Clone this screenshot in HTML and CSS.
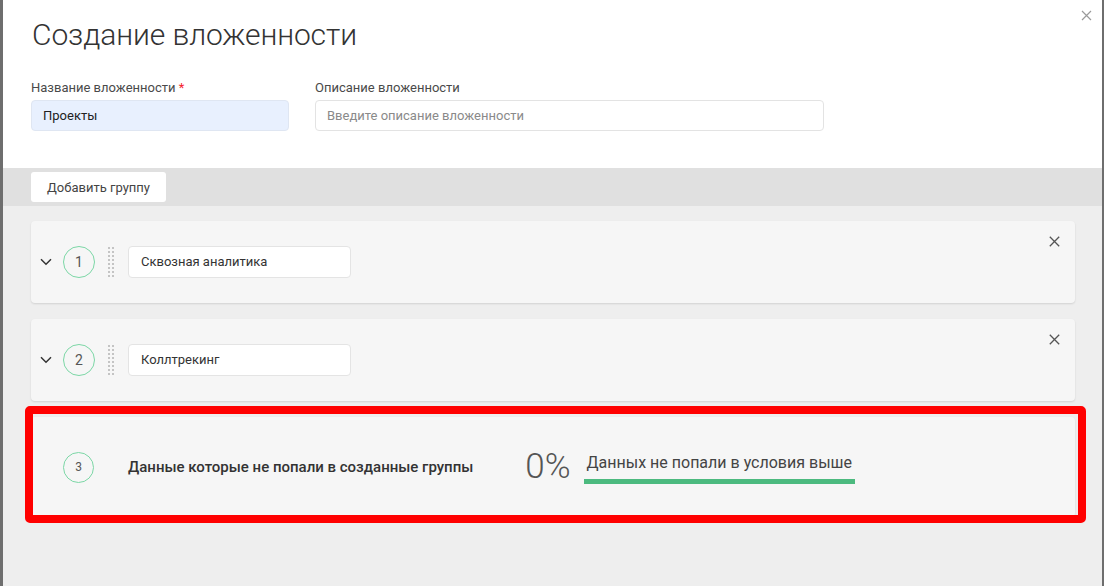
FILE: index.html
```html
<!DOCTYPE html>
<html lang="ru">
<head>
<meta charset="utf-8">
<title>Создание вложенности</title>
<link rel="stylesheet" href="styles.css">
</head>
<body>
<div class="page">
  <div class="modal">
    <div class="modal-head">
      <h1 class="title">Создание вложенности</h1>
      <button class="modal-close" aria-label="Закрыть">
        <svg width="11" height="11" viewBox="0 0 11 11"><path d="M1 1L10 10M10 1L1 10" stroke="#9a9a9a" stroke-width="1.2" fill="none"/></svg>
      </button>
      <div class="fields">
        <div class="field field-name">
          <label class="label">Название вложенности <span class="req">*</span></label>
          <div class="input input-filled">Проекты</div>
        </div>
        <div class="field field-desc">
          <label class="label">Описание вложенности</label>
          <div class="input input-empty">Введите описание вложенности</div>
        </div>
      </div>
    </div>
    <div class="toolbar">
      <button class="btn">Добавить группу</button>
    </div>
    <div class="content">
      <div class="card">
        <svg class="chevron" width="12" height="8" viewBox="0 0 12 8"><path d="M1 1.3L6 6.3L11 1.3" stroke="#333" stroke-width="1.5" fill="none"/></svg>
        <div class="num">1</div>
        <div class="handle"></div>
        <div class="group-input">Сквозная аналитика</div>
        <svg class="card-close" width="11" height="11" viewBox="0 0 11 11"><path d="M0.8 0.8L10.2 10.2M10.2 0.8L0.8 10.2" stroke="#555" stroke-width="1.3" fill="none"/></svg>
      </div>
      <div class="card">
        <svg class="chevron" width="12" height="8" viewBox="0 0 12 8"><path d="M1 1.3L6 6.3L11 1.3" stroke="#333" stroke-width="1.5" fill="none"/></svg>
        <div class="num">2</div>
        <div class="handle"></div>
        <div class="group-input">Коллтрекинг</div>
        <svg class="card-close" width="11" height="11" viewBox="0 0 11 11"><path d="M0.8 0.8L10.2 10.2M10.2 0.8L0.8 10.2" stroke="#555" stroke-width="1.3" fill="none"/></svg>
      </div>
      <div class="card card-rest">
        <div class="num num-small">3</div>
        <div class="rest-label">Данные которые не попали в созданные группы</div>
        <div class="percent">0%</div>
        <div class="rest-note">Данных не попали в условия выше</div>
      </div>
    </div>
  </div>
</div>
</body>
</html>
```

FILE: styles.css
```css
* { box-sizing: border-box; }
html, body { margin: 0; padding: 0; }
body {
  width: 1104px;
  height: 586px;
  overflow: hidden;
  background: #6e6e6e;
  font-family: Roboto, "Liberation Sans", Arial, sans-serif;
  color: #333;
}
.page {
  display: flex;
  height: 586px;
  padding-left: 3px;
  padding-right: 2px;
}
.modal {
  flex: 1;
  display: flex;
  flex-direction: column;
  background: #eeeeee;
}
.modal-head {
  position: relative;
  background: #fff;
  height: 168px;
  padding: 14px 28px 0 29px;
}
.title {
  margin: 0;
  font-size: 30px;
  font-weight: 300;
  line-height: 42px;
  color: #333;
  letter-spacing: -0.1px;
}
.modal-close {
  position: absolute;
  top: 10px;
  right: 10px;
  width: 11px;
  height: 11px;
  padding: 0;
  border: 0;
  background: none;
  display: flex;
}
.fields {
  display: flex;
  gap: 26px;
  margin-top: 24px;
  margin-left: -1px;
}
.field { display: flex; flex-direction: column; }
.field-name { width: 258px; }
.field-desc { width: 509px; }
.label {
  font-size: 13px;
  line-height: 16px;
  color: #4a4a4a;
  margin-bottom: 4px;
}
.req { color: #f5222d; }
.input {
  height: 31px;
  border: 1px solid #e3e3e3;
  border-radius: 4px;
  font-size: 13px;
  line-height: 29px;
  padding: 0 11px;
}
.input-filled { background: #e8f0fe; color: #222; border-color: #dfe6f2; }
.input-empty { background: #fff; color: #8a8a8a; }
.toolbar {
  background: #e0e0e0;
  height: 38px;
  padding: 4px 28px;
  display: flex;
}
.btn {
  width: 135px;
  height: 30px;
  border: 0;
  border-radius: 3px;
  background: #fff;
  font-family: inherit;
  font-size: 13px;
  color: #444;
  padding: 0;
}
.content {
  display: flex;
  flex-direction: column;
  gap: 16px;
  padding: 15px 27px 0 28px;
}
.card {
  height: 82px;
  background: #f6f6f6;
  border-radius: 4px;
  box-shadow: 0 1px 2px rgba(0,0,0,0.12);
  display: flex;
  align-items: center;
  padding-left: 9px;
}
.chevron { flex: none; }
.num {
  width: 32px;
  height: 32px;
  flex: none;
  margin-left: 11px;
  border: 1px solid #7cd7a6;
  border-radius: 50%;
  display: flex;
  align-items: center;
  justify-content: center;
  font-size: 14px;
  color: #555;
}
.handle {
  width: 7px;
  height: 32px;
  margin-left: 12px;
  flex: none;
  background-image: radial-gradient(circle, #c4c4c4 1px, transparent 1.2px);
  background-size: 4px 4px;
  background-position: 0 0;
}
.group-input {
  margin-left: 14px;
  width: 223px;
  height: 32px;
  background: #fff;
  border: 1px solid #e4e4e4;
  border-radius: 4px;
  font-size: 13px;
  line-height: 30px;
  padding: 0 12px;
  color: #333;
}
.card-close {
  flex: none;
  margin-left: auto;
  align-self: flex-start;
  margin-top: 15px;
  margin-right: 15px;
}
.card-rest {
  position: relative;
  height: 100px;
  padding-left: 32px;
}
.card-rest::after {
  content: "";
  position: absolute;
  left: -6px;
  right: -11px;
  top: -11px;
  bottom: -6px;
  border: 8px solid #ff0000;
  border-radius: 5px;
  pointer-events: none;
}
.num-small {
  margin-left: 0;
  width: 31px;
  height: 31px;
  font-size: 12px;
}
.rest-label {
  margin-left: 34px;
  font-size: 15px;
  font-weight: 500;
  color: #333;
}
.percent {
  margin-left: 52px;
  font-size: 35px;
  font-weight: 300;
  color: #555;
  line-height: 40px;
}
.rest-note {
  margin-left: 13px;
  margin-top: 2px;
  font-size: 16px;
  color: #444;
  padding: 0 3px 6px 3px;
  border-bottom: 5px solid #4cba7f;
  line-height: 20px;
}
```
